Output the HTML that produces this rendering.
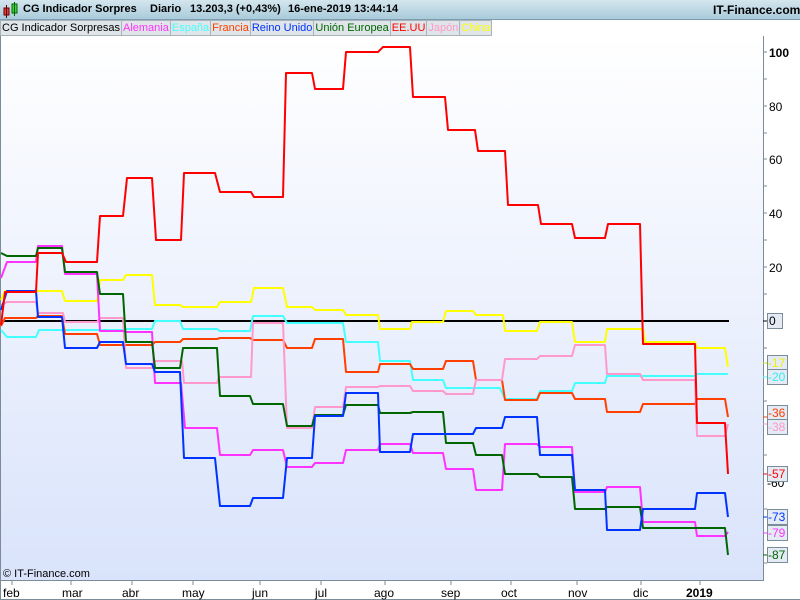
<!DOCTYPE html>
<html><head><meta charset="utf-8"><style>
body{margin:0;width:800px;height:600px;overflow:hidden;background:#fff;font-family:"Liberation Sans",Arial,sans-serif}
#hdr{position:absolute;left:0;top:0;width:800px;height:20px;background:linear-gradient(#d4e6ee,#a9cbdb);border-bottom:1px solid #7f9bb0;box-sizing:border-box}
#hdr .t{position:absolute;top:3px;font-size:11px;font-weight:bold;color:#000;white-space:pre}
#leg{position:absolute;left:0;top:20px;height:15px;display:flex;font-size:11px}
#leg span{display:block;height:14px;line-height:14px;padding:0 1px;border:1px solid #a8b4bc;border-left:none;background:#dfe5e8}
</style></head><body>
<div id="hdr">
<svg style="position:absolute;left:3px;top:2px" width="16" height="16"><rect x="1" y="6" width="5" height="7" fill="#e04040" stroke="#600" stroke-width="1"/><line x1="3.5" y1="3" x2="3.5" y2="16" stroke="#600"/><rect x="9" y="2" width="5" height="9" fill="#40d040" stroke="#060" stroke-width="1"/><line x1="11.5" y1="0" x2="11.5" y2="14" stroke="#060"/></svg>
<div class="t" style="left:23px">CG Indicador Sorpres</div>
<div class="t" style="left:150px">Diario</div>
<div class="t" style="left:190px">13.203,3 (+0,43%)</div>
<div class="t" style="left:288px">16-ene-2019 13:44:14</div>
<div class="t" style="left:713px;font-size:12px">IT-Finance.com</div>
</div>
<div id="leg">
<span style="color:#000;border-left:1px solid #a8b4bc">CG Indicador Sorpresas</span>
<span style="color:#ff33ff">Alemania</span>
<span style="color:#44ffff">España</span>
<span style="color:#ff4000">Francia</span>
<span style="color:#0033ff">Reino Unido</span>
<span style="color:#006600">Unión Europea</span>
<span style="color:#ff0000">EE.UU</span>
<span style="color:#ff99cc">Japón</span>
<span style="color:#ffff00">China</span>
</div>
<svg style="position:absolute;left:0;top:36px" width="800" height="564" viewBox="0 36 800 564" font-family="Liberation Sans, Arial, sans-serif">
<defs><linearGradient id="bg" x1="0" y1="0" x2="0" y2="1"><stop offset="0" stop-color="#ffffff"/><stop offset="1" stop-color="#d9e3fb"/></linearGradient></defs>
<rect x="0" y="36" width="763" height="544" fill="url(#bg)"/>
<line x1="0.5" y1="36" x2="0.5" y2="600" stroke="#7a8c98"/>
<line x1="763.5" y1="36" x2="763.5" y2="581" stroke="#7a8c98"/>
<line x1="0" y1="580.5" x2="764" y2="580.5" stroke="#7a8c98"/>
<line x1="0" y1="599.5" x2="800" y2="599.5" stroke="#7a8c98"/>
<g stroke="#7a8c98">
<line x1="763" y1="52" x2="767" y2="52"/><line x1="763" y1="79" x2="767" y2="79"/><line x1="763" y1="106" x2="767" y2="106"/><line x1="763" y1="133" x2="767" y2="133"/><line x1="763" y1="159" x2="767" y2="159"/><line x1="763" y1="186" x2="767" y2="186"/><line x1="763" y1="213" x2="767" y2="213"/><line x1="763" y1="240" x2="767" y2="240"/><line x1="763" y1="267" x2="767" y2="267"/><line x1="763" y1="294" x2="767" y2="294"/><line x1="763" y1="348" x2="767" y2="348"/><line x1="763" y1="401" x2="767" y2="401"/><line x1="763" y1="455" x2="767" y2="455"/><line x1="763" y1="509" x2="767" y2="509"/><line x1="763" y1="563" x2="767" y2="563"/>
<line x1="12" y1="581" x2="12" y2="585"/><line x1="71" y1="581" x2="71" y2="585"/><line x1="132" y1="581" x2="132" y2="585"/><line x1="193" y1="581" x2="193" y2="585"/><line x1="260" y1="581" x2="260" y2="585"/><line x1="321" y1="581" x2="321" y2="585"/><line x1="385" y1="581" x2="385" y2="585"/><line x1="451" y1="581" x2="451" y2="585"/><line x1="511" y1="581" x2="511" y2="585"/><line x1="577" y1="581" x2="577" y2="585"/><line x1="641" y1="581" x2="641" y2="585"/><line x1="700" y1="581" x2="700" y2="585"/>
</g>
<g font-size="12" fill="#000">
<text x="769" y="57" font-weight="bold">100</text>
<text x="769" y="111">80</text><text x="769" y="164">60</text><text x="769" y="218">40</text><text x="769" y="272">20</text>
<text x="767" y="487">-60</text>
<text x="3" y="597">feb</text><text x="62" y="597">mar</text><text x="122" y="597">abr</text><text x="182" y="597">may</text><text x="252" y="597">jun</text><text x="315" y="597">jul</text><text x="374" y="597">ago</text><text x="441" y="597">sep</text><text x="501" y="597">oct</text><text x="568" y="597">nov</text><text x="633" y="597">dic</text><text x="686" y="597" font-weight="bold">2019</text>
</g>
<text x="3" y="577" font-size="11" fill="#000">© IT-Finance.com</text>
<g fill="none" stroke-width="2" stroke-linejoin="round">
<polyline stroke="#000" points="2,321 729,321"/>
<polyline stroke="#ffff00" points="1,300 5,291 36,291 62,291 65,301 97,301 100,280 123,280 126,275 152,275 155,305 180,305 183,307 217,307 220,302 251,302 254,288 283,288 287,307 312,307 315,310 343,310 346,315 378,315 380,329 410,329 412,322 443,322 446,311 473,311 476,315 503,315 505,331 537,331 540,322 572,322 575,342 605,342 607,329 643,329 645,342 695,342 697,348 725,348 728,367"/>
<polyline stroke="#44ffff" points="1,330 7,337 36,337 39,330 123,330 126,329 152,329 155,321 180,321 183,329 217,329 220,331 250,331 253,316 283,316 287,323 343,323 346,342 378,342 380,361 410,361 413,380 443,380 446,388 500,388 505,399 537,399 540,391 572,391 575,383 605,383 607,376 695,376 697,374 728,374"/>
<polyline stroke="#ff4000" points="1,326 5,318 36,318 38,316 62,316 65,334 97,334 100,345 152,345 155,342 180,342 183,339 217,339 220,338 250,338 253,340 283,340 287,348 312,348 315,339 343,339 346,372 378,372 380,364 410,364 413,369 443,369 446,361 473,361 476,380 502,380 505,400 537,400 540,393 572,393 575,399 605,399 607,412 640,412 643,404 695,404 697,399 725,399 728,417"/>
<polyline stroke="#ff99cc" points="1,305 7,302 36,302 38,313 63,313 65,322 97,322 100,318 123,318 126,368 153,368 155,361 182,361 184,383 217,383 219,377 251,377 253,323 283,323 287,428 312,428 315,407 343,407 346,387 378,387 380,386 410,386 413,391 443,391 446,394 473,394 476,380 502,380 505,359 537,359 540,356 572,356 575,345 605,345 607,374 640,374 643,380 695,380 697,436 725,436 728,424"/>
<polyline stroke="#ff33ff" points="1,278 7,262 36,262 38,246 62,246 65,274 97,274 100,331 123,331 126,332 152,332 155,383 181,383 185,428 217,428 220,455 250,455 253,450 283,450 287,467 312,467 315,463 343,463 346,450 378,450 380,444 410,444 413,453 443,453 446,469 473,469 476,490 502,490 505,444 537,444 540,447 572,447 575,492 605,492 607,487 640,487 643,522 695,522 697,536 725,536 728,532"/>
<polyline stroke="#006600" points="1,253 7,256 36,256 38,248 62,248 65,272 97,272 100,294 123,294 126,342 152,342 155,368 180,368 183,348 217,348 220,396 250,396 253,404 283,404 287,426 312,426 315,415 343,415 346,405 378,405 380,413 410,413 413,412 443,412 446,443 473,443 476,455 502,455 505,474 537,474 540,477 572,477 575,509 605,509 607,507 640,507 643,528 725,528 728,555"/>
<polyline stroke="#0033ff" points="1,310 7,291 36,291 38,317 62,317 65,348 97,348 100,342 123,342 126,364 152,364 155,372 180,372 184,458 215,458 220,506 250,506 253,498 283,498 287,458 312,458 315,416 343,416 346,393 378,393 380,452 410,452 413,434 473,434 476,428 502,428 505,417 537,417 540,455 572,455 575,490 605,490 607,530 640,530 643,509 695,509 697,493 725,493 728,517"/>
<polyline stroke="#ff0000" points="1,325 5,292 36,292 38,253 62,253 66,262 97,262 100,216 123,216 127,178 152,178 156,240 181,240 184,173 215,173 220,192 251,192 254,197 283,197 286,73 312,73 315,89 343,89 346,52 378,52 383,47 410,47 413,97 445,97 448,130 475,130 478,151 505,151 508,205 538,205 541,224 572,224 575,238 605,238 608,224 640,224 643,344 695,344 697,423 725,423 728,474"/>
</g>
<g font-size="12" stroke-width="1">
<line x1="763" y1="321" x2="767" y2="321" stroke="#000"/><rect x="767.5" y="313.5" width="15" height="15" fill="#e4ebf5" stroke="#7a8c98"/><text x="769" y="325" fill="#000">0</text>
<line x1="763" y1="363" x2="767" y2="363" stroke="#dd0"/><rect x="767.5" y="355.5" width="20" height="15" fill="#e4ebf5" stroke="#7a8c98"/><text x="768" y="367" fill="#ee0">-17</text>
<line x1="763" y1="377" x2="767" y2="377" stroke="#4ff"/><rect x="767.5" y="369.5" width="20" height="15" fill="#e4ebf5" stroke="#7a8c98"/><text x="768" y="381" fill="#3ee">-20</text>
<line x1="763" y1="417" x2="767" y2="417" stroke="#ff4000"/><rect x="767.5" y="405.5" width="20" height="15" fill="#e4ebf5" stroke="#7a8c98"/><text x="768" y="417" fill="#ff4000">-36</text>
<line x1="763" y1="424" x2="767" y2="424" stroke="#f9c"/><rect x="767.5" y="419.5" width="20" height="15" fill="#e4ebf5" stroke="#7a8c98"/><text x="768" y="431" fill="#f9c">-38</text>
<line x1="763" y1="474" x2="767" y2="474" stroke="#f00"/><rect x="767.5" y="466.5" width="20" height="15" fill="#e4ebf5" stroke="#7a8c98"/><text x="768" y="478" fill="#f00">-57</text>
<line x1="763" y1="517" x2="767" y2="517" stroke="#03f"/><rect x="767.5" y="509.5" width="20" height="15" fill="#e4ebf5" stroke="#7a8c98"/><text x="768" y="521" fill="#03f">-73</text>
<line x1="763" y1="533" x2="767" y2="533" stroke="#f3f"/><rect x="767.5" y="525.5" width="20" height="15" fill="#e4ebf5" stroke="#7a8c98"/><text x="768" y="537" fill="#f3f">-79</text>
<line x1="763" y1="555" x2="767" y2="555" stroke="#060"/><rect x="767.5" y="547.5" width="20" height="15" fill="#e4ebf5" stroke="#7a8c98"/><text x="768" y="559" fill="#060">-87</text>
</g>
</svg>
</body></html>
